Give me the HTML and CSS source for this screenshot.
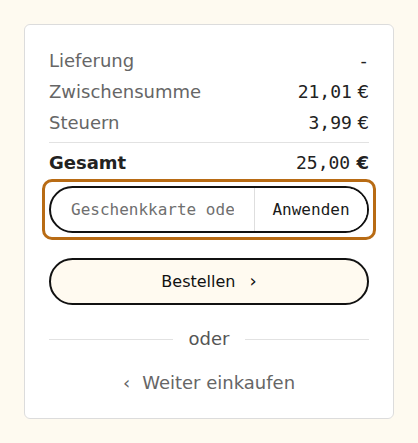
FILE: index.html
```html
<!DOCTYPE html>
<html lang="de">
<head>
<meta charset="utf-8">
<link rel="stylesheet" href="styles.css">
</head>
<body>
<div class="card">
  <div class="rows">
    <div class="row"><span class="label">Lieferung</span><span class="value"><span class="num">-</span></span></div>
    <div class="row"><span class="label">Zwischensumme</span><span class="value"><span class="num">21,01</span><span class="cur"> €</span></span></div>
    <div class="row"><span class="label">Steuern</span><span class="value"><span class="num">3,99</span><span class="cur"> €</span></span></div>
  </div>
  <div class="total row"><span class="label">Gesamt</span><span class="value"><span class="num">25,00</span><span class="cur"> €</span></span></div>
  <div class="focus-ring">
    <form class="gift">
      <input class="gift-input" type="text" placeholder="Geschenkkarte oder Rabattcode">
      <button class="gift-btn" type="button">Anwenden</button>
    </form>
  </div>
  <button class="order" type="button">Bestellen<span class="chev">›</span></button>
  <div class="or"><span class="line"></span><span class="or-text">oder</span><span class="line"></span></div>
  <a class="back" href="#"><span class="chev-l">‹</span>Weiter einkaufen</a>
</div>
</body>
</html>
```
FILE: styles.css
```css
html, body { margin: 0; padding: 0; }
body {
  background: #fefaf0;
  padding: 24px;
  font-family: "DejaVu Sans", sans-serif;
  font-size: 18px;
}
.card {
  background: #fff;
  border: 1px solid #dcdcdc;
  border-radius: 6px;
  padding: 24px 24px 23px;
  display: flex;
  flex-direction: column;
}
.rows {
  display: flex;
  flex-direction: column;
  gap: 7px;
  padding-bottom: 7px;
  border-bottom: 1px solid #e2e2e2;
}
.row {
  display: flex;
  justify-content: space-between;
  line-height: 24px;
}
.label { color: #666; }
.value { color: #222; }
.num { font-family: "DejaVu Sans Mono", monospace; }
.cur { font-family: "DejaVu Sans", sans-serif; }
.total { padding-top: 8px; }
.total .label { font-weight: bold; color: #222; }
.total .cur { font-weight: bold; }
.focus-ring {
  margin: 4px -7px 0;
  padding: 4px;
  border: 3px solid #b86b14;
  border-radius: 10px;
}
.gift {
  display: flex;
  height: 47px;
  box-sizing: border-box;
  border: 2px solid #111;
  border-radius: 24px;
  overflow: hidden;
  margin: 0;
}
.gift-input {
  flex: 1;
  min-width: 0;
  border: 0;
  outline: none;
  padding: 0 20px 0 20px;
  font-family: "DejaVu Sans Mono", monospace;
  font-size: 16px;
  color: #222;
  background: transparent;
}
.gift-input::placeholder { color: #6f6f6f; }
.gift-btn {
  border: 0;
  border-left: 1px solid #dedede;
  background: #fff;
  width: 113px;
  padding: 0;
  font-family: "DejaVu Sans Mono", monospace;
  font-size: 16px;
  color: #1a1a1a;
}
.order {
  margin-top: 18px;
  height: 47px;
  border: 2px solid #111;
  border-radius: 24px;
  background: #fffaf0;
  font-family: "DejaVu Sans", sans-serif;
  font-size: 16px;
  color: #111;
  display: flex;
  align-items: center;
  justify-content: center;
  gap: 14px;
  padding: 0;
}
.chev { font-size: 18px; line-height: 1; position: relative; top: -1px; }
.or {
  margin-top: 22px;
  display: flex;
  align-items: center;
  gap: 16px;
  line-height: 24px;
}
.line { flex: 1; height: 1px; background: #e2e2e2; }
.or-text { color: #555; }
.back {
  margin-top: 20px;
  align-self: center;
  color: #666;
  text-decoration: none;
  line-height: 24px;
  display: flex;
  align-items: center;
  gap: 12px;
}
.chev-l { font-size: 18px; }
```
